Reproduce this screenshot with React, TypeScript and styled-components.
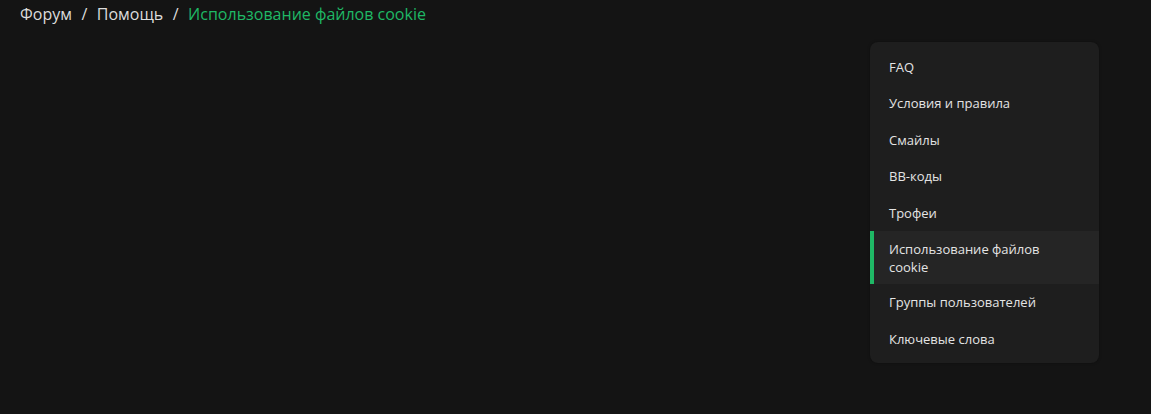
import React from "react";
import styled, { createGlobalStyle } from "styled-components";

const Global = createGlobalStyle`
  html, body { margin: 0; padding: 0; background: #141414; }
  body { font-family: "Open Sans", "Noto Sans", sans-serif; color: #e6e6e6; }
  #root { min-height: 414px; }
`;

const Page = styled.div`
  width: 1151px;
  height: 414px;
  box-sizing: border-box;
  padding: 3px 52px 0 20px;
  display: flex;
  flex-direction: column;
  gap: 17px;
`;

const Crumbs = styled.nav`
  display: flex;
  align-items: center;
  gap: 9.5px;
  font-size: 16px;
  line-height: 22px;
  height: 22px;
`;

const Crumb = styled.span<{ $active?: boolean }>`
  color: ${(p) => (p.$active ? "#1fb865" : "#dcdcdc")};
`;

const Sep = styled.span`
  color: #dcdcdc;
`;

const Body = styled.div`
  display: flex;
  justify-content: flex-end;
`;

const Menu = styled.ul`
  list-style: none;
  margin: 0;
  padding: 6.5px 0 6px;
  width: 229px;
  background: #1e1e1e;
  border-radius: 8px;
  box-shadow: 0 0 3px rgba(0, 0, 0, 0.35);
  overflow: hidden;
`;

const Item = styled.li<{ $active?: boolean }>`
  position: relative;
  box-sizing: border-box;
  display: flex;
  align-items: center;
  min-height: 36.5px;
  padding: 8.5px 20px 8.5px 19px;
  font-size: 13px;
  line-height: 18px;
  color: #e4e4e4;
  background: ${(p) => (p.$active ? "#252525" : "transparent")};
  &::before {
    content: "";
    display: ${(p) => (p.$active ? "block" : "none")};
    position: absolute;
    left: 0;
    top: 0;
    bottom: 0;
    width: 4px;
    background: #1fb865;
  }
`;

const items = [
  "FAQ",
  "Условия и правила",
  "Смайлы",
  "BB-коды",
  "Трофеи",
  "Использование файлов cookie",
  "Группы пользователей",
  "Ключевые слова",
];

export default function App() {
  return (
    <>
      <Global />
      <Page>
        <Crumbs>
          <Crumb>Форум</Crumb>
          <Sep>/</Sep>
          <Crumb>Помощь</Crumb>
          <Sep>/</Sep>
          <Crumb $active>Использование файлов cookie</Crumb>
        </Crumbs>
        <Body>
          <Menu>
            {items.map((t, i) => (
              <Item key={t} $active={i === 5}>
                {t}
              </Item>
            ))}
          </Menu>
        </Body>
      </Page>
    </>
  );
}
